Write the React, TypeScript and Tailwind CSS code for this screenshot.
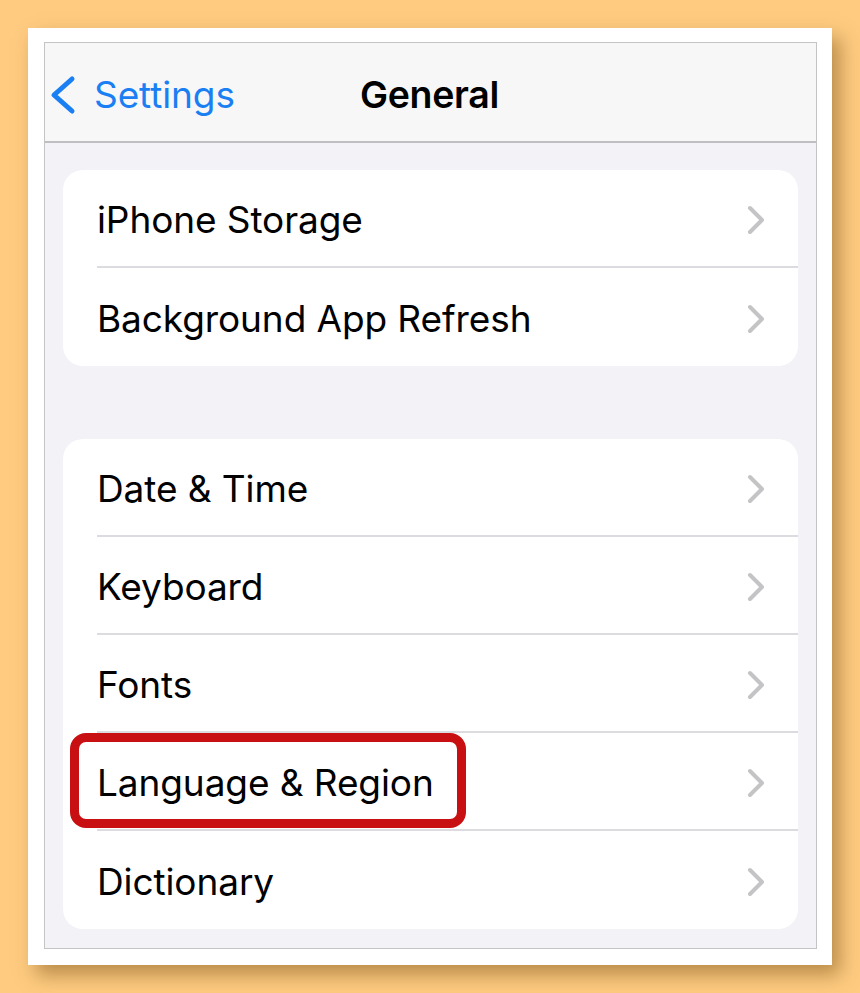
import React from 'react';

const font = { fontFamily: 'Inter, "Noto Sans", sans-serif' };

const Chevron: React.FC = () => (
  <svg width="18" height="30" viewBox="0 0 18 30" fill="none" className="shrink-0">
    <path d="M4 3 L16 15 L4 27" stroke="#c4c4c7" strokeWidth="4" strokeLinecap="round" strokeLinejoin="round" />
  </svg>
);

const Row: React.FC<{ label: string; last?: boolean; highlight?: boolean }> = ({ label, last, highlight }) => (
  <div className="relative h-[98px] flex items-center pl-[34px]">
    <div
      className={`flex-1 h-full flex items-center pr-[34px] pt-[3px] ${last ? '' : 'border-b-2 border-[#dcdce0]'}`}
    >
      <span className="flex-1 text-[37px] text-black tracking-[-0.1px]">{label}</span>
      <Chevron />
    </div>
    {highlight && (
      <div className="absolute left-[7px] top-0 w-[396px] h-[95px] border-[9px] border-[#c80f12] rounded-[16px]" />
    )}
  </div>
);

const Group: React.FC<{ items: string[]; highlight?: string }> = ({ items, highlight }) => (
  <div className="mx-[18px] bg-white rounded-[20px]">
    {items.map((it, i) => (
      <Row key={it} label={it} last={i === items.length - 1} highlight={it === highlight} />
    ))}
  </div>
);

export default function App() {
  return (
    <div className="w-[860px] h-[993px] bg-[#fecb81] pt-[28px] pl-[28px]" style={font}>
      <div className="w-[804px] h-[937px] bg-white pt-[14px] pl-[16px] shadow-[8px_10px_18px_rgba(120,80,20,0.5)]">
        <div className="w-[773px] h-[907px] border border-[#c4c4c4] bg-[#f2f2f7] flex flex-col">
          <div className="h-[100px] bg-[#f7f7f7] border-b-2 border-[#bfbfc2] flex items-center relative pt-[6px]">
            <div className="flex items-center pl-[3px] text-[#1b7ff4]">
              <svg width="30" height="44" viewBox="0 0 30 44" fill="none">
                <path d="M24 6 L6 22 L24 38" stroke="#1b7ff4" strokeWidth="5" strokeLinecap="round" strokeLinejoin="round" />
              </svg>
              <span className="ml-[16px] text-[37px] tracking-[-0.1px]">Settings</span>
            </div>
            <div className="absolute inset-0 pt-[6px] flex items-center justify-center pointer-events-none">
              <span className="text-[37.5px] font-semibold text-black tracking-[-0.3px] ml-[-2px]">General</span>
            </div>
          </div>
          <div className="pt-[27px]">
            <Group items={['iPhone Storage', 'Background App Refresh']} />
            <div className="h-[73px]" />
            <Group
              items={['Date & Time', 'Keyboard', 'Fonts', 'Language & Region', 'Dictionary']}
              highlight="Language & Region"
            />
          </div>
        </div>
      </div>
    </div>
  );
}
